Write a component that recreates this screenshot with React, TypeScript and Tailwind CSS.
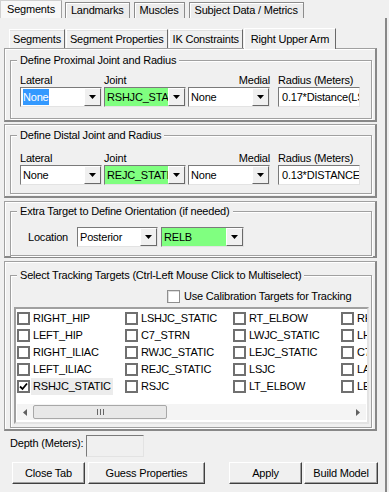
import React from "react";

const raised =
  "border border-t-white border-l-white border-r-[#696969] border-b-[#696969]";
const sunken =
  "border border-t-[#7a7a7a] border-l-[#7a7a7a] border-r-[#e3e3e3] border-b-[#e3e3e3]";

function Arrow() {
  return (
    <svg width="7" height="4" viewBox="0 0 7 4">
      <path d="M0 0 H7 L3.5 4 Z" fill="#000" />
    </svg>
  );
}

function Combo({
  value,
  green,
  focus,
  className,
}: {
  value: string;
  green?: boolean;
  focus?: boolean;
  className: string;
}) {
  return (
    <div className={`flex h-[20px] bg-white ${sunken} ${className}`}>
      <div
        className={`flex-1 flex items-center pl-[2px] overflow-hidden whitespace-nowrap ${
          green ? "bg-[#80ff80]" : "bg-white"
        }`}
      >
        <span className={focus ? "bg-[#3399ff] text-white" : ""}>{value}</span>
      </div>
      <div
        className={`w-[17px] flex items-center justify-center bg-[#f0f0f0] ${raised}`}
      >
        <Arrow />
      </div>
    </div>
  );
}

function TextBox({ value, className }: { value: string; className: string }) {
  return (
    <div
      className={`h-[20px] flex items-center pl-[3px] bg-white overflow-hidden whitespace-nowrap ${sunken} ${className}`}
    >
      {value}
    </div>
  );
}

function Group({
  title,
  className,
  children,
}: {
  title: string;
  className: string;
  children: React.ReactNode;
}) {
  return (
    <div
      className={`relative border border-[#a0a0a0] shadow-[inset_1px_1px_0_#fff,1px_1px_0_#fff] ${className}`}
    >
      <span className="absolute -top-[8px] left-[6px] px-[3px] bg-[#f0f0f0] leading-[14px]">
        {title}
      </span>
      {children}
    </div>
  );
}

const section =
  "border-t border-l border-t-[#a0a0a0] border-l-[#a0a0a0] border-r-2 border-b-2 border-r-[#888] border-b-[#888] shadow-[inset_1px_1px_0_#fff]";

function JointGroup({
  title,
  joint,
  radius,
  focus,
  labelTop,
}: {
  title: string;
  joint: string;
  radius: string;
  focus?: boolean;
  labelTop: string;
}) {
  return (
    <Group title={title} className="ml-[5px] mr-[3px] h-[59px]">
      <div className={`pl-[9px] ${labelTop}`}>
        <div className="flex h-[14px] leading-[14px]">
          <span className="w-[84px]">Lateral</span>
          <span className="w-[84px]">Joint</span>
          <span className="w-[82px] text-right">Medial</span>
          <span className="ml-[8px]">Radius (Meters)</span>
        </div>
        <div className="flex gap-[2px]">
          <Combo value="None" focus={focus} className="w-[82px]" />
          <Combo value={joint} green className="w-[82px]" />
          <Combo value="None" className="w-[82px]" />
          <TextBox value={radius} className="w-[82px] ml-[6px]" />
        </div>
      </div>
    </Group>
  );
}

const columns = [
  ["RIGHT_HIP", "LEFT_HIP", "RIGHT_ILIAC", "LEFT_ILIAC", "RSHJC_STATIC"],
  ["LSHJC_STATIC", "C7_STRN", "RWJC_STATIC", "REJC_STATIC", "RSJC"],
  ["RT_ELBOW", "LWJC_STATIC", "LEJC_STATIC", "LSJC", "LT_ELBOW"],
  ["RHJC_STATIC", "LHJC_STATIC", "C7", "LASI", "LELB"],
];

function CheckBox({ checked }: { checked?: boolean }) {
  return (
    <div className="w-[13px] h-[13px] border-2 border-[#707070] bg-white flex items-center justify-center shrink-0">
      {checked && (
        <svg width="9" height="9" viewBox="0 0 9 9">
          <path d="M1 4.5 L3.5 7 L8 1.5" stroke="#000" strokeWidth="1.8" fill="none" />
        </svg>
      )}
    </div>
  );
}

function TargetList() {
  return (
    <div className="ml-[3px] mr-[2px] mt-[4px] h-[117px] flex flex-col bg-white border-2 border-t-[#a0a0a0] border-l-[#a0a0a0] border-r-[#e3e3e3] border-b-[#e3e3e3]">
      <div className="flex-1 flex pt-[1px] pl-[1px] overflow-hidden">
        {columns.map((col, ci) => (
          <div key={ci} className="w-[108px] shrink-0 flex flex-col">
            {col.map((name, ri) => {
              const checked = ci === 0 && ri === 4;
              return (
                <div key={name} className="h-[17px] flex items-center">
                  <CheckBox checked={checked} />
                  <span
                    className={`ml-[1px] px-[2px] h-[17px] leading-[17px] whitespace-nowrap ${
                      checked ? "bg-[#ececec]" : ""
                    }`}
                  >
                    {name}
                  </span>
                </div>
              );
            })}
          </div>
        ))}
      </div>
      <div className="h-[16px] mx-[1px] mb-[2px] flex items-center bg-[#f4f4f4]">
        <div className="w-[16px] flex justify-center">
          <svg width="4" height="7" viewBox="0 0 4 7">
            <path d="M4 0 V7 L0 3.5 Z" fill="#606060" />
          </svg>
        </div>
        <div className="w-[134px] h-[14px] rounded-[2px] border border-[#a8a8a8] bg-[#e8e8e8] flex items-center justify-center">
          <svg width="7" height="6" viewBox="0 0 7 6">
            <path d="M0.5 0 V6 M3.5 0 V6 M6.5 0 V6" stroke="#666" strokeWidth="1" />
          </svg>
        </div>
        <div className="flex-1" />
        <div className="w-[16px] flex justify-center">
          <svg width="4" height="7" viewBox="0 0 4 7">
            <path d="M0 0 V7 L4 3.5 Z" fill="#606060" />
          </svg>
        </div>
      </div>
    </div>
  );
}

function Button({ label, className }: { label: string; className: string }) {
  return (
    <div
      className={`h-[22px] flex items-center justify-center bg-[#f0f0f0] border border-t-white border-l-white border-r-[#404040] border-b-[#404040] shadow-[inset_-1px_-1px_0_#a0a0a0] ${className}`}
    >
      {label}
    </div>
  );
}

export default function App() {
  const outerTabs = ["Landmarks", "Muscles", "Subject Data / Metrics"];
  const innerTabs = ["Segments", "Segment Properties", "IK Constraints"];

  return (
    <div className="w-[389px] h-[492px] bg-[#f0f0f0] text-black text-[11px] tracking-[-0.2px] font-['Liberation_Sans',Arial,sans-serif] overflow-hidden flex flex-col">
      {/* outer tabs */}
      <div className="h-[18px] flex items-end shrink-0">
        <div className="h-[18px] px-[6px] flex items-center bg-[#f7f7f7] border-l border-t border-r border-l-[#d0d0d0] border-t-[#d0d0d0] border-r-[#a0a0a0]">
          Segments
        </div>
        <div className="ml-[3px] flex gap-[4px]">
          {outerTabs.map((t) => (
            <div
              key={t}
              className="h-[16px] px-[5px] flex items-center bg-[#ececec] border border-b-0 border-[#8c8c8c] shadow-[inset_1px_1px_0_#fff]"
            >
              {t}
            </div>
          ))}
        </div>
      </div>

      {/* outer page */}
      <div className="flex-1 w-[387px] border-r-2 border-r-[#888] flex flex-col">
        <div className="h-[20px] mt-[10px] flex items-end pl-[9px] shrink-0">
          {innerTabs.map((t) => (
            <div
              key={t}
              className="h-[19px] px-[3px] mr-[1px] flex items-center bg-[#f0f0f0] border border-b-0 border-t-[#fff] border-l-[#fff] border-r-[#696969] shadow-[inset_0_1px_0_#e0e0e0]"
            >
              {t}
            </div>
          ))}
          <div className="relative z-10 h-[21px] -mb-px px-[6px] flex items-start pt-[2px] bg-[#f0f0f0] border border-b-0 border-t-white border-l-white border-r-[#696969]">
            Right Upper Arm
          </div>
        </div>

        {/* inner page */}
        <div className="ml-[4px] w-[373px] flex flex-col">
          <div className={`h-[74px] pt-[11px] ${section}`}>
            <JointGroup
              title="Define Proximal Joint and Radius"
              joint="RSHJC_STATIC"
              radius="0.17*Distance(LSHJC,RSHJC)"
              focus
              labelTop="pt-[12px]"
            />
          </div>
          <div className={`mt-[2px] h-[74px] pt-[10px] ${section}`}>
            <JointGroup
              title="Define Distal Joint and Radius"
              joint="REJC_STATIC"
              radius="0.13*DISTANCE(REJC,RWJC)"
              labelTop="pt-[15px]"
            />
          </div>
          <div className={`mt-[3px] h-[57px] pt-[9px] ${section}`}>
            <Group
              title="Extra Target to Define Orientation (if needed)"
              className="ml-[5px] mr-[3px] h-[45px]"
            >
              <div className="flex items-center pt-[15px] pl-[17px]">
                <span className="w-[49px]">Location</span>
                <Combo value="Posterior" className="w-[81px]" />
                <Combo value="RELB" green className="w-[83px] ml-[3px]" />
              </div>
            </Group>
          </div>
          <div className={`mt-[3px] h-[170px] pt-[13px] ${section}`}>
            <Group
              title="Select Tracking Targets (Ctrl-Left Mouse Click to Multiselect)"
              className="ml-[5px] mr-[3px] h-[153px]"
            >
              <div className="h-[14px] mt-[13px] flex items-center pl-[156px]">
                <div className="w-[13px] h-[13px] border border-[#8f8f8f] bg-white shadow-[inset_1px_1px_0_#ddd]" />
                <span className="ml-[4px]">Use Calibration Targets for Tracking</span>
              </div>
              <TargetList />
            </Group>
          </div>
        </div>

        {/* bottom */}
        <div className="flex items-start mt-[4px] pl-[10px]">
          <span className="leading-[14px] mt-[1px]">Depth (Meters):</span>
          <div className={`ml-[3px] w-[58px] h-[22px] bg-[#f0f0f0] ${sunken}`} />
        </div>
        <div className="flex mt-[5px] pl-[12px]">
          <Button label="Close Tab" className="w-[73px]" />
          <Button label="Guess Properties" className="w-[117px] ml-[3px]" />
          <Button label="Apply" className="w-[73px] ml-[24px]" />
          <Button label="Build Model" className="w-[74px] ml-[2px]" />
        </div>
      </div>
    </div>
  );
}
